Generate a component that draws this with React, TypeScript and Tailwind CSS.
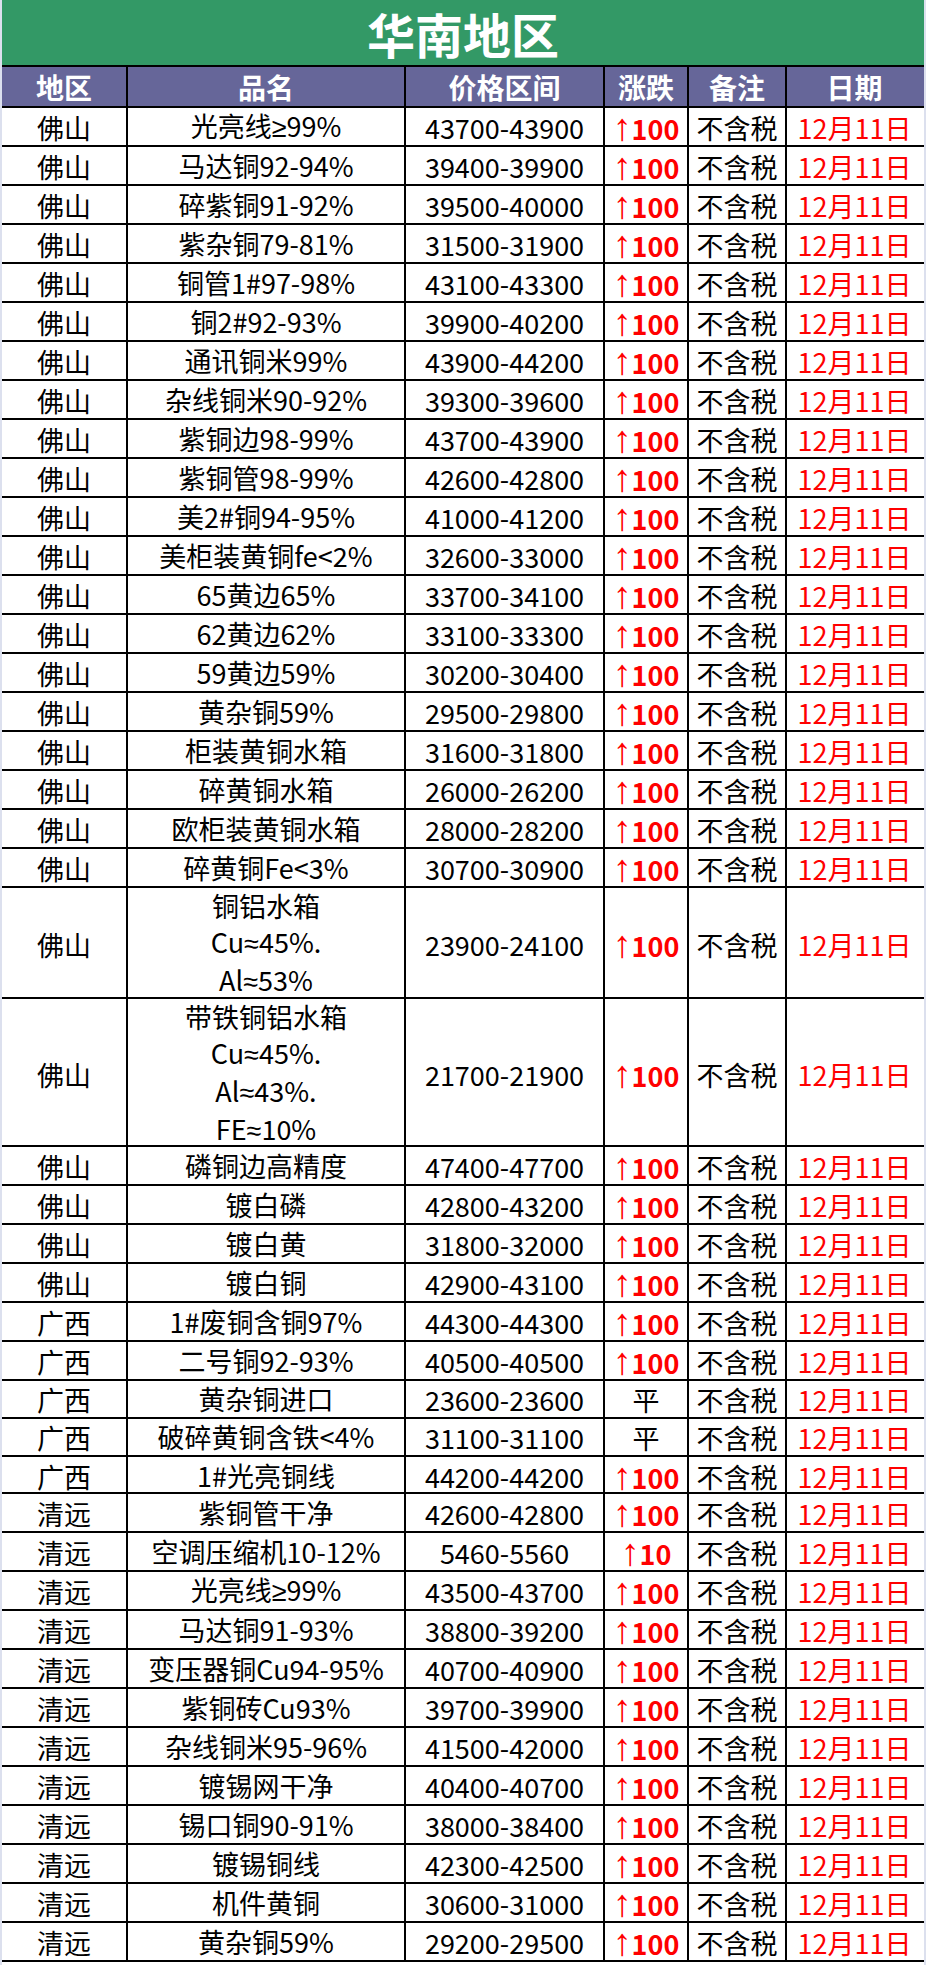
import React from 'react';

type Row = {
  area: string;
  name: string[];
  price: string;
  change: string;
  h: string;
};

const single = (area: string, name: string, price: string, change = '100', h = 'h-[39px]'): Row => ({
  area,
  name: [name],
  price,
  change,
  h,
});

const rows: Row[] = [
  single('佛山', '光亮线≥99%', '43700-43900'),
  single('佛山', '马达铜92-94%', '39400-39900'),
  single('佛山', '碎紫铜91-92%', '39500-40000'),
  single('佛山', '紫杂铜79-81%', '31500-31900'),
  single('佛山', '铜管1#97-98%', '43100-43300'),
  single('佛山', '铜2#92-93%', '39900-40200'),
  single('佛山', '通讯铜米99%', '43900-44200'),
  single('佛山', '杂线铜米90-92%', '39300-39600'),
  single('佛山', '紫铜边98-99%', '43700-43900'),
  single('佛山', '紫铜管98-99%', '42600-42800'),
  single('佛山', '美2#铜94-95%', '41000-41200'),
  single('佛山', '美柜装黄铜fe<2%', '32600-33000'),
  single('佛山', '65黄边65%', '33700-34100'),
  single('佛山', '62黄边62%', '33100-33300'),
  single('佛山', '59黄边59%', '30200-30400'),
  single('佛山', '黄杂铜59%', '29500-29800'),
  single('佛山', '柜装黄铜水箱', '31600-31800'),
  single('佛山', '碎黄铜水箱', '26000-26200'),
  single('佛山', '欧柜装黄铜水箱', '28000-28200'),
  single('佛山', '碎黄铜Fe<3%', '30700-30900'),
  { area: '佛山', name: ['铜铝水箱', 'Cu≈45%.', 'Al≈53%'], price: '23900-24100', change: '100', h: 'h-[111px]' },
  { area: '佛山', name: ['带铁铜铝水箱', 'Cu≈45%.', 'Al≈43%.', 'FE≈10%'], price: '21700-21900', change: '100', h: 'h-[148px]' },
  single('佛山', '磷铜边高精度', '47400-47700'),
  single('佛山', '镀白磷', '42800-43200'),
  single('佛山', '镀白黄', '31800-32000'),
  single('佛山', '镀白铜', '42900-43100'),
  single('广西', '1#废铜含铜97%', '44300-44300'),
  single('广西', '二号铜92-93%', '40500-40500'),
  single('广西', '黄杂铜进口', '23600-23600', '平', 'h-[38px]'),
  single('广西', '破碎黄铜含铁<4%', '31100-31100', '平', 'h-[38px]'),
  single('广西', '1#光亮铜线', '44200-44200', '100', 'h-[37px]'),
  single('清远', '紫铜管干净', '42600-42800'),
  single('清远', '空调压缩机10-12%', '5460-5560', '10'),
  single('清远', '光亮线≥99%', '43500-43700'),
  single('清远', '马达铜91-93%', '38800-39200'),
  single('清远', '变压器铜Cu94-95%', '40700-40900'),
  single('清远', '紫铜砖Cu93%', '39700-39900'),
  single('清远', '杂线铜米95-96%', '41500-42000'),
  single('清远', '镀锡网干净', '40400-40700'),
  single('清远', '锡口铜90-91%', '38000-38400'),
  single('清远', '镀锡铜线', '42300-42500'),
  single('清远', '机件黄铜', '30600-31000'),
  single('清远', '黄杂铜59%', '29200-29500'),
];

const cols = 'grid grid-cols-[126px_278px_199px_84px_98px_135px]';
const cell = 'flex items-center justify-center border-r-2 border-black';
const headers = ['地区', '品名', '价格区间', '涨跌', '备注', '日期'];

// symbols like ≈ ≥ are full-width in the CJK font, the sheet shows narrow ones
function Name({ text }: { text: string }) {
  const parts = text.split(/([≈≥])/);
  return (
    <span className="leading-[36px]">
      {parts.map((p, i) =>
        p === '≈' || p === '≥' ? (
          <span key={i} className="font-['Liberation_Sans',sans-serif]">
            {p}
          </span>
        ) : (
          <React.Fragment key={i}>{p}</React.Fragment>
        )
      )}
    </span>
  );
}

export default function App() {
  return (
    <div
      className="w-[926px] h-[1965px] bg-white border-x-2 border-[#dce0ee] overflow-hidden"
      style={{ fontFamily: '"Noto Sans CJK SC", "Noto Sans", sans-serif' }}
    >
      <div className="h-[67px] bg-[#339966] flex items-center justify-center border-b-2 border-black">
        <span className="text-white font-bold text-[48px] leading-[64px]">华南地区</span>
      </div>
      <div className={`${cols} h-[41px] bg-[#666699] border-b-2 border-black`}>
        {headers.map((h, i) => (
          <div
            key={h}
            className={`flex items-center justify-center text-white font-bold text-[28px] leading-none ${
              i < 5 ? 'border-r-2 border-black' : ''
            }`}
          >
            {h}
          </div>
        ))}
      </div>
      {rows.map((r, idx) => (
        <div key={idx} className={`${cols} ${r.h} border-b-2 border-black text-[27px] leading-none text-black`}>
          <div className={cell}>{r.area}</div>
          <div className={`${cell} flex-col`}>
            {r.name.map((n) => (
              <Name key={n} text={n} />
            ))}
          </div>
          <div className={cell}>{r.price}</div>
          <div className={cell}>
            {r.change === '平' ? (
              <span>平</span>
            ) : (
              <span className="flex items-baseline text-[#ff0000]">
                <span className="font-['Liberation_Sans',sans-serif] font-normal text-[38px] leading-none">↑</span>
                <span className="font-bold">{r.change}</span>
              </span>
            )}
          </div>
          <div className={cell}>不含税</div>
          <div className="flex items-center justify-center text-[#ff0000]">12月11日</div>
        </div>
      ))}
    </div>
  );
}
